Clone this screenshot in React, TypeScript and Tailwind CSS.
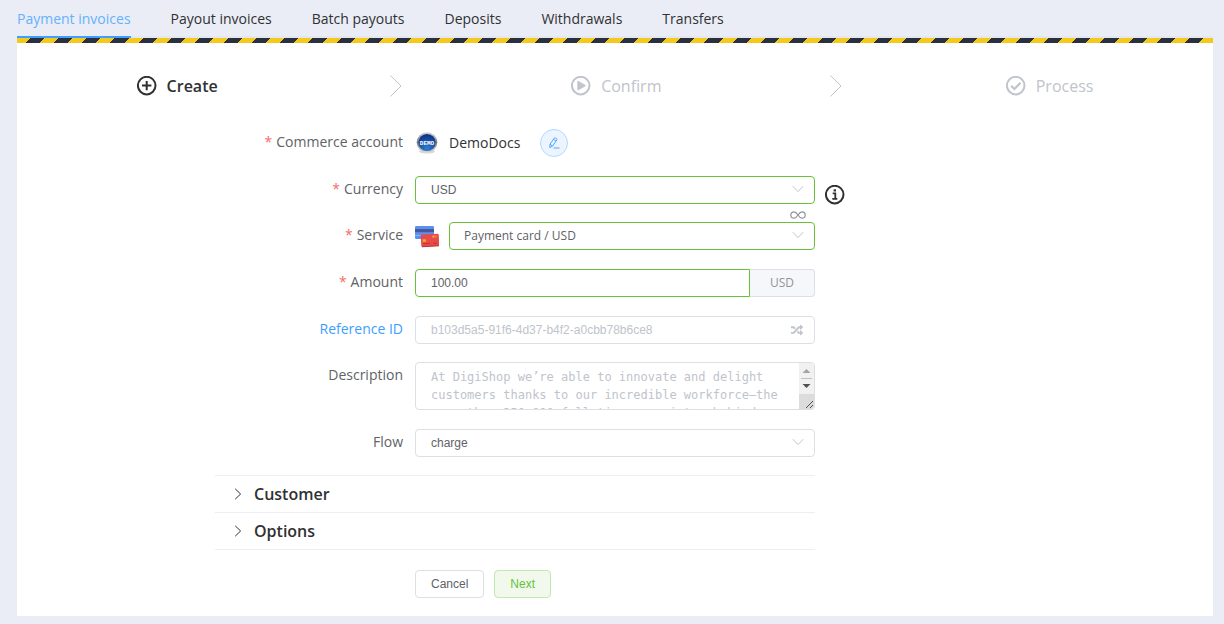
import { useState, type ReactNode } from "react";
import { FaRandom } from "react-icons/fa";

const TABS = ["Payment invoices", "Payout invoices", "Batch payouts", "Deposits", "Withdrawals", "Transfers"];

const DESCRIPTION_HINT =
  "At DigiShop we’re able to innovate and delight customers thanks to our incredible workforce—the more than 350,000 full-time associates behind our stores.";

function CircleIcon({ children }: { children: ReactNode }) {
  return (
    <svg viewBox="0 0 20 20" className="size-5 shrink-0" fill="none" stroke="currentColor" strokeWidth="2" aria-hidden="true">
      <circle cx="9.7" cy="9.6" r="8.8" />
      {children}
    </svg>
  );
}

function Chevron({ className }: { className: string }) {
  return (
    <svg viewBox="0 0 12 12" className={className} fill="none" stroke="currentColor" aria-hidden="true">
      <path d="M.8 3.2 6 8.6 11.200 3.200" />
    </svg>
  );
}

function StepArrow() {
  return (
    <span className="flex flex-1 justify-center pr-[6px] text-[#c0c4cc]">
      <svg viewBox="0 0 12 22" className="h-[22px] w-3" fill="none" stroke="currentColor" aria-hidden="true">
        <path d="M.5.5 11 11 .5 21.5" />
      </svg>
    </span>
  );
}

function EditIcon() {
  return (
    <svg viewBox="0 0 12 12" className="size-3" fill="none" stroke="currentColor" strokeWidth="0.9" aria-hidden="true">
      <path d="M2 7.2 6.2 1.2Q6.8.5 7.6 1L8.6 1.7Q9.3 2.3 8.8 3L4.6 9 1.8 10.6ZM5.5 2.3 7.9 4M2 7.2 4.6 9M5.5 11H11.5" />
    </svg>
  );
}

function DemoBadge() {
  return (
    <svg viewBox="0 0 24 24" className="size-6 shrink-0" aria-hidden="true">
      <defs>
        <linearGradient id="rim" x1="0" y1="0" x2="0" y2="1">
          <stop offset="0" stopColor="#d5d5d5" />
          <stop offset="0.5" stopColor="#77797d" />
          <stop offset="1" stopColor="#dcdcdc" />
        </linearGradient>
        <radialGradient id="face" cx="0.5" cy="0.85" r="0.8">
          <stop offset="0" stopColor="#2f7fd0" />
          <stop offset="1" stopColor="#0b3289" />
        </radialGradient>
      </defs>
      <ellipse cx="12" cy="20.500" rx="8" ry="2" fill="#d9d9d9" />
      <circle cx="12" cy="11.500" r="10.300" fill="url(#rim)" />
      <circle cx="12" cy="11.500" r="8.600" fill="url(#face)" />
      <text x="12" y="14" textAnchor="middle" fontSize="6" fontWeight="700" fill="#fff" fontFamily="Liberation Sans Narrow, Liberation Mono, monospace">
        DEMO
      </text>
    </svg>
  );
}

function CardsIcon() {
  return (
    <svg viewBox="0 0 24 24" className="size-6 shrink-0" aria-hidden="true">
      <rect x="0" y="2" width="19" height="13" rx="1.2" fill="#5991ee" />
      <rect x="0" y="5" width="19" height="3.2" fill="#4c5599" />
      <rect x="0" y="11" width="6" height="1" fill="#88b3f8" />
      <g transform="rotate(-3 15 16)">
        <rect x="6" y="10.2" width="18" height="12.2" rx="1.2" fill="#ea4b48" />
        <path d="M6.5 22.2h17" stroke="#b9342f" />
        <rect x="7.6" y="15" width="3.4" height="2.6" rx="0.5" fill="#e6ad32" />
        <circle cx="18.600" cy="12.800" r="1.200" fill="#e9b03d" />
        <circle cx="20.800" cy="12.800" r="1.200" fill="#f07a45" />
        <path d="M8 19.500h7M18 19.500h4" stroke="#c33532" />
      </g>
    </svg>
  );
}

function ScrollTrack() {
  return (
    <svg viewBox="0 0 15 46" className="pointer-events-none absolute top-px right-px h-[46px] w-[15px] rounded-r-[3px]" aria-hidden="true">
      <rect width="15" height="46" fill="#f1f1f1" />
      <rect y="31" width="15" height="15" fill="#dcdcdc" />
      <path d="M3.500 10 7.500 6l4 4Z" fill="#a3a3a3" />
      <path d="M2 15.500h11" stroke="#c1c1c1" />
      <path d="M3.500 21 7.500 25l4-4Z" fill="#505050" />
      <path d="M7 45 14 38M11 45l3-3" stroke="#505050" />
    </svg>
  );
}

type RowProps = { id: string; label: string; required?: boolean; link?: boolean; children: ReactNode };

function Row({ id, label, required, link, children }: RowProps) {
  return (
    <div className="flex">
      <label htmlFor={id} className={`w-1/3 shrink-0 pr-3 text-right text-sm leading-[26px] ${link ? "text-[#409eff]" : "text-[#606266]"}`}>
        {required && <span className="mr-1 text-[#f56c6c]">*</span>}
        {label}
      </label>
      <div className="relative flex min-w-0 flex-1 items-center">{children}</div>
    </div>
  );
}

type SelectProps = { id: string; options: string[]; valid?: boolean; sans?: boolean };

function Select({ id, options, valid, sans }: SelectProps) {
  return (
    <div className="relative min-w-0 flex-1">
      <select
        id={id}
        className={`block h-7 w-full appearance-none rounded border bg-white pr-8 text-xs text-[#606266] outline-none ${valid ? "border-[#67c23a]" : "border-[#dcdfe6]"} ${sans ? "pl-[14px]" : "pl-[15px] font-['Liberation_Sans',sans-serif]"}`}
      >
        {options.map((o) => (
          <option key={o}>{o}</option>
        ))}
      </select>
      <Chevron className="pointer-events-none absolute top-[7px] right-[11px] size-3 text-[#c0c4cc]" />
    </div>
  );
}

function Section({ title }: { title: string }) {
  const [open, setOpen] = useState(false);
  return (
    <button
      type="button"
      aria-expanded={open}
      onClick={() => setOpen(!open)}
      className="flex h-[37px] w-full items-center gap-[10px] border-b border-[#ebeef5] pl-[17px] text-base font-semibold text-[#303133]"
    >
      <Chevron className="size-3 -rotate-90" />
      {title}
    </button>
  );
}

export default function App() {
  const [tab, setTab] = useState(TABS[0]);
  return (
    <div className="min-h-screen bg-[#eaedf6] pr-[11px] pb-2 pl-[17px] font-['Open_Sans',sans-serif] text-[#303133]">
      <nav className="flex h-[38px] gap-10 border-b-2 border-[#e4e7ed] text-sm">
        {TABS.map((t) => (
          <a
            key={t}
            href="#"
            onClick={() => setTab(t)}
            className={`-mb-[2px] flex h-[38px] items-center border-b-2 pt-[2px] whitespace-nowrap ${t === tab ? "border-[#409eff] text-[#66b1ff]" : "border-transparent"}`}
          >
            {t}
          </a>
        ))}
      </nav>
      <div className="h-[5px] bg-[repeating-linear-gradient(-45deg,#f3c91f_0_10px,#2b303f_10px_20px)]" />
      <main className="bg-white pb-[18px]">
        <ol className="flex h-[86px] items-center px-[10%] text-base text-[#c0c4cc]">
          <li className="flex flex-1 items-center gap-[10px] font-semibold text-[#303133]">
            <CircleIcon>
              <path d="M9.700 4.900v9.400M5 9.600h9.400" />
            </CircleIcon>
            Create
            <StepArrow />
          </li>
          <li className="flex flex-1 items-center gap-[10px]">
            <CircleIcon>
              <path d="M7 5.600v8l7-4Z" fill="currentColor" strokeWidth="1.400" strokeLinejoin="round" />
            </CircleIcon>
            Confirm
            <StepArrow />
          </li>
          <li className="flex items-center gap-[10px]">
            <CircleIcon>
              <path d="M5.200 9.900 8.400 13 14.500 6.800" strokeWidth="2.200" />
            </CircleIcon>
            Process
          </li>
        </ol>
        <form className="ml-[198px] max-w-[600px]" onSubmit={(e) => e.preventDefault()}>
          <div className="flex min-h-[328px] flex-col justify-between">
            <Row id="account" label="Commerce account" required>
              <DemoBadge />
              <span className="ml-[10px] text-sm">DemoDocs</span>
              <button
                id="account"
                type="button"
                aria-label="Change commerce account"
                className="ml-5 flex size-7 items-center justify-center rounded-full border border-[#b3d8ff] bg-[#ecf5ff] text-[#409eff]"
              >
                <EditIcon />
              </button>
            </Row>
            <Row id="currency" label="Currency" required>
              <Select id="currency" options={["USD", "EUR"]} valid />
              <span className="absolute top-[9px] left-full ml-[10px]">
                <CircleIcon>
                  <path d="M7.700 8.400h2.600v5.200M7.300 13.800h5" strokeWidth="1.800" />
                  <path d="M8.600 5.400H11" strokeWidth="2.200" />
                </CircleIcon>
              </span>
            </Row>
            <Row id="service" label="Service" required>
              <CardsIcon />
              <span className="w-[10px] shrink-0" />
              <Select id="service" options={["Payment card / USD"]} valid sans />
              <svg viewBox="0 0 16 8" className="absolute -top-[11px] right-[9px] h-2 w-4 text-[#909399]" fill="none" stroke="currentColor" strokeWidth="1.2" aria-hidden="true">
                <path d="M8 4C6.500 1.800 5.500.8 4 .8a3.200 3.200 0 0 0 0 6.400C5.500 7.200 6.500 6.200 8 4S10.500.8 12 .8a3.200 3.200 0 0 1 0 6.400C10.500 7.200 9.500 6.200 8 4Z" />
              </svg>
            </Row>
            <Row id="amount" label="Amount" required>
              <input
                id="amount"
                defaultValue="100.00"
                className="h-7 min-w-0 flex-1 rounded-l border border-[#67c23a] px-[15px] font-['Liberation_Sans',sans-serif] text-xs text-[#606266] outline-none"
              />
              <span className="flex h-7 items-center rounded-r border border-l-0 border-[#dcdfe6] bg-[#f5f7fa] px-5 text-xs text-[#909399]">USD</span>
            </Row>
            <Row id="reference" label="Reference ID" link>
              <input
                id="reference"
                placeholder="b103d5a5-91f6-4d37-b4f2-a0cbb78b6ce8"
                className="h-7 w-full rounded border border-[#dcdfe6] pr-8 pl-[15px] font-['Liberation_Sans',sans-serif] text-xs outline-none placeholder:text-[#c0c4cc]"
              />
              <button type="button" aria-label="Generate reference" className="absolute right-3 text-[#c0c4cc]">
                <FaRandom className="size-3" />
              </button>
            </Row>
            <Row id="description" label="Description">
              <textarea
                id="description"
                placeholder={DESCRIPTION_HINT}
                className="block h-12 w-full resize-none overflow-y-scroll rounded border border-[#dcdfe6] px-[15px] py-[5px] font-['DejaVu_Sans_Mono',monospace] text-xs leading-[18px] outline-none placeholder:text-[#c0c4cc]"
              />
              <ScrollTrack />
            </Row>
            <Row id="flow" label="Flow">
              <Select id="flow" options={["charge", "authorization"]} />
            </Row>
          </div>
          <div className="mt-[18px] border-t border-[#ebeef5]">
            <Section title="Customer" />
            <Section title="Options" />
          </div>
          <div className="mt-5 ml-[33.333%] flex gap-[10px] font-['Liberation_Sans',sans-serif] text-xs">
            <button type="button" className="h-7 rounded border border-[#dcdfe6] bg-white px-[15px] text-[#606266]">
              Cancel
            </button>
            <button type="submit" className="h-7 rounded border border-[#c2e7b0] bg-[#f0f9eb] px-[15px] text-[#67c23a]">
              Next
            </button>
          </div>
        </form>
      </main>
    </div>
  );
}
